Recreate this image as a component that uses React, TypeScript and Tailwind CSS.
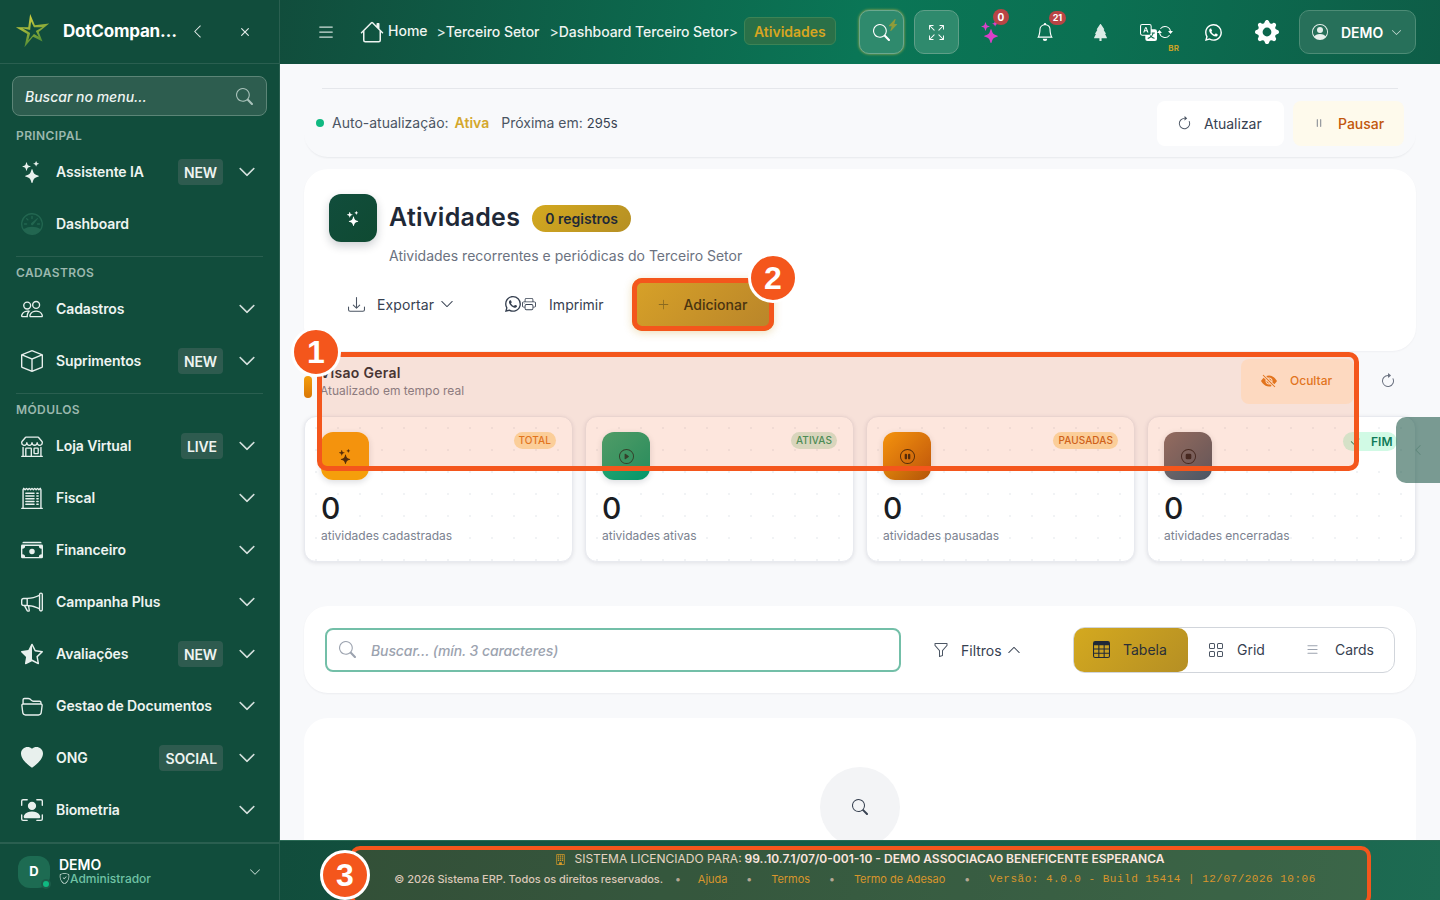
import React from "react";
import {
  BsArrowClockwise, BsArrowRepeat, BsArrowsFullscreen, BsBell, BsBox, BsBuilding, BsCashStack, BsCheck2, BsChevronDown, BsChevronLeft, BsChevronUp, BsDownload, BsEyeSlashFill, BsFolder2Open, BsFunnel, BsGearFill, BsGrid, BsHeartFill, BsHouse, BsLightningChargeFill, BsList, BsMegaphone, BsPauseCircle, BsPause, BsPeople, BsPersonBoundingBox, BsPersonCircle, BsPlayCircle, BsPlusLg, BsPrinter, BsReceiptCutoff, BsSearch, BsShieldCheck, BsShop, BsSpeedometer, BsStarHalf, BsStars, BsStopCircle, BsTable, BsTranslate, BsTreeFill, BsWhatsapp, BsX,
} from "react-icons/bs";

type Item = { icon: React.ReactNode; label: string; badge?: string; noChevron?: boolean };

const icon = "w-[22px] h-[22px] text-[#e8f0ed]";

function Row({ item }: { item: Item }) {
  return (
    <div className="h-[52px] flex items-center pl-[21px] pr-[23px] text-[#eef4f1]">
      <span className="w-[35px] shrink-0 flex">{item.icon}</span>
      <span className="flex-1 -mt-[1px] text-[14px] font-semibold tracking-[-0.1px] whitespace-nowrap">{item.label}</span>
      {item.badge && (
        <span className="h-[26px] px-[6px] rounded-[4px] bg-[#2e5b4f] flex items-center text-[14px] font-semibold tracking-[-0.1px]">{item.badge}</span>
      )}
      {!item.noChevron && <BsChevronDown className="w-[18px] h-[18px] ml-[15px] text-[#e4ecea] stroke-[0.5px]" />}
    </div>
  );
}

function Section({ title, items, first }: { title: string; items: Item[]; first?: boolean }) {
  return (
    <div>
      <div className={`${first ? "" : "border-t border-[#2a5f50] mt-[6px] pt-[8px]"} mx-[16px] text-[12px] leading-[16px] font-semibold tracking-[0.4px] text-[#9bb8ae] pb-[2px]`}>
        {title}
      </div>
      {items.map((i) => (
        <Row key={i.label} item={i} />
      ))}
    </div>
  );
}

function Sidebar() {
  return (
    <aside className="w-[280px] shrink-0 h-full bg-[#114d3c] border-r border-[#2a5f50] flex flex-col">
      <div className="h-[64px] shrink-0 border-b border-[#2a5f50] flex items-center pl-[14px] pr-[25px]">
        <svg viewBox="0 0 40 40" className="w-[38px] h-[38px] shrink-0">
          <defs>
            <linearGradient id="lg" x1="0" y1="0" x2="0.4" y2="1">
              <stop offset="0" stopColor="#f0e040" />
              <stop offset="1" stopColor="#4d8a35" />
            </linearGradient>
          </defs>
          <path d="M17 1 L22 13 L37 11 L26 20 L30 30 L20 25 L11 36 L14 22 L2 15 L15 15 Z M18 9 L17 18 L9 16 L17 21 L15 29 L21 22 L26 25 L23 19 L30 15 L21 15 Z" fill="url(#lg)" fillRule="evenodd" />
        </svg>
        <span className="ml-[11px] text-[17px] font-bold text-white tracking-[-0.2px] w-[111px] whitespace-nowrap">DotCompan…</span>
        <BsChevronLeft className="ml-[16px] w-[15px] h-[15px] text-[#e4ecea]" />
        <BsX className="ml-[auto] w-[18px] h-[18px] text-[#e4ecea]" />
      </div>
      <div className="mt-[12px] mx-[12px] h-[40px] shrink-0 rounded-[8px] bg-[#2d5d4f] border border-[#5c8577] flex items-center pl-[12px] pr-[13px]">
        <span className="flex-1 text-[14px] font-medium italic text-[#eef4f1]">Buscar no menu...</span>
        <BsSearch className="w-[17px] h-[17px] text-[#a9c2ba]" />
      </div>
      <div className="flex-1 min-h-0 overflow-hidden pt-[12px]">
        <Section
          first
          title="PRINCIPAL"
          items={[
            { icon: <BsStars className={icon} />, label: "Assistente IA", badge: "NEW" },
            { icon: <BsSpeedometer className="w-[22px] h-[22px] text-[#226650]" />, label: "Dashboard", noChevron: true },
          ]}
        />
        <Section
          title="CADASTROS"
          items={[
            { icon: <BsPeople className={icon} />, label: "Cadastros" },
            { icon: <BsBox className={icon} />, label: "Suprimentos", badge: "NEW" },
          ]}
        />
        <Section
          title="MÓDULOS"
          items={[
            { icon: <BsShop className={icon} />, label: "Loja Virtual", badge: "LIVE" },
            { icon: <BsReceiptCutoff className={icon} />, label: "Fiscal" },
            { icon: <BsCashStack className={icon} />, label: "Financeiro" },
            { icon: <BsMegaphone className={icon} />, label: "Campanha Plus" },
            { icon: <BsStarHalf className={icon} />, label: "Avaliações", badge: "NEW" },
            { icon: <BsFolder2Open className={icon} />, label: "Gestao de Documentos" },
            { icon: <BsHeartFill className={icon} />, label: "ONG", badge: "SOCIAL" },
            { icon: <BsPersonBoundingBox className={icon} />, label: "Biometria" },
          ]}
        />
      </div>
      <div className="h-[58px] shrink-0 border-t-2 border-[#2a5f50] flex items-center pl-[18px] pr-[18px]">
        <div className="relative w-[32px] h-[32px] rounded-[12px] bg-[#1d6b52] flex items-center justify-center text-white text-[13px] font-bold">
          D
          <span className="absolute -right-[1px] -bottom-[1px] w-[10px] h-[10px] rounded-full bg-[#10b981] border-2 border-[#1d5c49]" />
        </div>
        <div className="ml-[9px] flex-1 flex flex-col -mt-[1px]">
          <span className="text-[14px] leading-[14px] font-semibold text-white">DEMO</span>
          <span className="flex items-center text-[12px] leading-[13px] font-medium text-[#6fc2a4]">
            <BsShieldCheck className="w-[11px] h-[11px] text-[#cfe3dc]" />
            Administrador
          </span>
        </div>
        <BsChevronDown className="w-[12px] h-[12px] text-[#cfe3dc]" />
      </div>
    </aside>
  );
}

function Header() {
  return (
    <header className="h-[64px] shrink-0 bg-[linear-gradient(100deg,#114d3c_0%,#0a7656_50%,#0b7052_70%,#0e5d47_100%)] flex items-center pl-[36px] text-[#eef4f1]">
      <BsList className="w-[20px] h-[20px] text-[#cfe0da]" />
      <BsHouse className="ml-[24px] w-[24px] h-[24px] text-[#eef4f1]" />
      <span className="ml-[4px] text-[14px] font-medium -mt-[4px]">Home</span>
      <span className="ml-[9px] text-[14px] text-[#dfe9e5] -mt-[2px]">&gt;</span>
      <span className="text-[14px] font-medium -mt-[2px] tracking-[-0.05px]">Terceiro Setor</span>
      <span className="ml-[10px] text-[14px] text-[#dfe9e5] -mt-[2px]">&gt;</span>
      <span className="text-[14px] font-medium -mt-[2px] tracking-[-0.05px]">Dashboard Terceiro Setor</span>
      <span className="text-[14px] text-[#dfe9e5] -mt-[2px]">&gt;</span>
      <span className="ml-[6px] -mt-[2px] h-[28px] w-[92px] rounded-[6px] bg-[#2a7048] border border-[#3d8355] flex items-center justify-center text-[14px] font-semibold text-[#d6a521]">Atividades</span>
      <div className="ml-[23px] relative w-[45px] h-[44px] rounded-[10px] bg-[#2f8a6d] border border-[#6ba88f] flex items-center justify-center shadow-[0_0_3px_#b9b04a]">
        <BsSearch className="w-[17px] h-[17px] text-white" />
        <BsLightningChargeFill className="absolute right-[4px] top-[8px] w-[12px] h-[12px] text-[#8f9c3a]" />
      </div>
      <div className="ml-[10px] w-[45px] h-[44px] rounded-[10px] bg-[#2f8a6d] border border-[#5f9f88] flex items-center justify-center">
        <BsArrowsFullscreen className="w-[15px] h-[15px] text-white" />
      </div>
      <div className="ml-[20px] relative w-[24px] h-[24px] flex items-center justify-center">
        <BsStars className="w-[22px] h-[22px] text-[#d940c8]" />
        <span className="absolute -right-[6px] -top-[11px] w-[16px] h-[16px] rounded-full bg-[#b94545] text-white text-[10px] font-bold flex items-center justify-center">0</span>
      </div>
      <div className="ml-[33px] -mt-[1px] relative flex">
        <BsBell className="w-[18px] h-[18px] text-white" />
        <span className="absolute -right-[12px] -top-[12px] w-[17px] h-[14px] rounded-full bg-[#b94545] text-white text-[9px] font-bold flex items-center justify-center">21</span>
      </div>
      <BsTreeFill className="ml-[38px] w-[17px] h-[17px] text-[#dcebe6]" />
      <div className="ml-[31px] relative flex items-center">
        <BsTranslate className="w-[17px] h-[17px] text-white" />
        <BsArrowRepeat className="w-[16px] h-[16px] text-white" />
        <span className="absolute right-[-6px] -bottom-[13px] text-[8px] font-bold text-[#c9a227]">BR</span>
      </div>
      <BsWhatsapp className="ml-[32px] w-[17px] h-[17px] text-white" />
      <BsGearFill className="ml-[33px] w-[24px] h-[24px] text-white" />
      <div className="ml-[20px] w-[117px] h-[44px] rounded-[10px] bg-[#27705a] border border-[#4d8c76] flex items-center pl-[12px]">
        <BsPersonCircle className="w-[16px] h-[16px] text-[#e6f0ec]" />
        <span className="ml-[13px] text-[14px] font-semibold text-white">DEMO</span>
        <BsChevronDown className="ml-[8px] w-[11px] h-[11px] text-[#cfe0da]" />
      </div>
    </header>
  );
}

function Stat({ iconEl, grad, tag, tagCls, label }: { iconEl: React.ReactNode; grad: string; tag: string; tagCls: string; label: string }) {
  return (
    <div className="flex-1 h-[146px] rounded-[12px] bg-white border border-[#e8eaef] shadow-[0_1px_4px_rgba(15,23,42,0.1)] pt-[15px] px-[16px] bg-[radial-gradient(#f1f3f5_1px,transparent_1px)] bg-[length:22px_22px]">
      <div className="flex items-start justify-between">
        <div className={`w-[48px] h-[48px] rounded-[12px] ${grad} flex items-center justify-center shadow-[0_2px_6px_rgba(15,23,42,0.15)]`}>{iconEl}</div>
        <span className={`h-[17px] px-[5px] rounded-full text-[10px] font-medium tracking-[0.1px] flex items-center ${tagCls}`}>{tag}</span>
      </div>
      <div className="mt-[10px] text-[30px] leading-[36px] font-medium text-[#1a1d23]">0</div>
      <div className="mt-[1px] text-[12px] leading-[18px] text-[#7b8290]">{label}</div>
    </div>
  );
}

function Content() {
  return (
    <div className="flex-1 min-h-0 overflow-hidden bg-[#f8f9fb] pt-[24px] pl-[24px] pr-[24px]">
      <div className="h-[69px] rounded-[24px] shadow-[0_2px_2px_-1px_rgba(15,23,42,0.07)] flex flex-col text-[14px] text-[#4b5563]">
        <div className="h-px mx-[18px] bg-[#e5e7eb] shrink-0" />
        <div className="flex-1 flex items-center pl-[12px] pr-[12px]">
          <span className="w-[8px] h-[8px] rounded-full bg-[#10b981]" />
          <div className="flex items-baseline">
            <span className="ml-[8px]">Auto-atualização:</span>
            <span className="ml-[6px] font-semibold text-[#d4a72c]">Ativa</span>
            <span className="ml-[12px]">Próxima em:</span>
            <span className="ml-[4px] text-[#374151] text-[13px]">295s</span>
          </div>
          <div className="ml-auto w-[127px] h-[45px] rounded-[8px] bg-white flex items-center pl-[20px] text-[#374151]">
            <BsArrowClockwise className="w-[15px] h-[15px] text-[#4b5563]" />
            <span className="ml-[12px]">Atualizar</span>
          </div>
          <div className="ml-[9px] w-[111px] h-[45px] rounded-[8px] bg-[#fefaec] flex items-center pl-[19px] text-[#c2570c]">
            <BsPause className="w-[14px] h-[14px] text-[#6b7280]" />
            <span className="ml-[12px] font-medium">Pausar</span>
          </div>
        </div>
      </div>

      <div className="mt-[12px] h-[182px] rounded-[24px] bg-white shadow-[0_1px_2px_rgba(15,23,42,0.04)] pt-[25px] pl-[25px]">
        <div className="flex items-center">
          <div className="w-[48px] h-[48px] rounded-[12px] bg-[linear-gradient(135deg,#114d3c,#0f4a32)] flex items-center justify-center shadow-[0_4px_10px_rgba(15,23,42,0.2)]">
            <BsStars className="w-[15px] h-[15px] text-white" />
          </div>
          <h1 className="ml-[12px] text-[25px] font-semibold text-[#1f2937] tracking-[0.3px]">Atividades</h1>
          <span className="ml-[12px] h-[27px] px-[13px] rounded-full bg-[linear-gradient(135deg,#d4a91f,#b58f24)] text-[14px] font-semibold text-[#1f2937] flex items-center">0 registros</span>
        </div>
        <p className="mt-[4px] ml-[60px] text-[14px] leading-[20px] text-[#6b7280]">Atividades recorrentes e periódicas do Terceiro Setor</p>
        <div className="mt-[14px] flex items-center text-[14px] text-[#374151] h-[48px]">
          <BsDownload className="ml-[19px] w-[17px] h-[17px] text-[#4b5563]" />
          <span className="ml-[12px] tracking-[0.1px]">Exportar</span>
          <BsChevronDown className="ml-[6px] w-[14px] h-[14px]" />
          <BsWhatsapp className="ml-[51px] w-[16px] h-[16px]" />
          <BsPrinter className="w-[14px] h-[14px] ml-[1px]" />
          <span className="ml-[13px]">Imprimir</span>
          <div className="ml-[28px] w-[142px] h-[53px] rounded-[10px] bg-[linear-gradient(135deg,#d8a228,#b8842a)] flex items-center pl-[25px] text-[#4a3410] shadow-[0_2px_8px_rgba(200,150,30,0.3)]">
            <BsPlusLg className="w-[13px] h-[13px] text-[#8a6a20]" />
            <span className="ml-[14px] font-medium">Adicionar</span>
          </div>
        </div>
      </div>

      <div className="h-[60px] flex items-center">
        <span className="w-[8px] h-[22px] rounded-full bg-[linear-gradient(180deg,#f59e0b,#d97706)] mt-[12px] shrink-0" />
        <div className="ml-[8px] flex-1">
          <div className="text-[14px] leading-[20px] font-semibold text-[#2a2f38] tracking-[0.3px]">Visao Geral</div>
          <div className="text-[12px] leading-[16px] text-[#7b8290]">Atualizado em tempo real</div>
        </div>
        <div className="w-[113px] h-[45px] rounded-[8px] bg-[#fff0dd] flex items-center pl-[20px] text-[12px] font-medium text-[#e07a1f]">
          <BsEyeSlashFill className="w-[16px] h-[16px]" />
          <span className="ml-[13px]">Ocultar</span>
        </div>
        <BsArrowClockwise className="ml-[26px] mr-[20px] w-[16px] h-[16px] text-[#6b7280]" />
      </div>

      <div className="mt-[5px] flex gap-[12px]">
        <Stat grad="bg-[linear-gradient(135deg,#f59e0b,#f59e0b)]" iconEl={<BsStars className="w-[15px] h-[15px] text-[#3a2508]" />} tag="TOTAL" tagCls="bg-[#fde3b0] text-[#e07a1f]" label="atividades cadastradas" />
        <Stat grad="bg-[linear-gradient(135deg,#34a874,#059669)]" iconEl={<BsPlayCircle className="w-[15px] h-[15px] text-[#143c2d]" />} tag="ATIVAS" tagCls="bg-[#d5ecd9] text-[#2f9560]" label="atividades ativas" />
        <Stat grad="bg-[linear-gradient(135deg,#f59e0b,#b45309)]" iconEl={<BsPauseCircle className="w-[15px] h-[15px] text-[#3a2508]" />} tag="PAUSADAS" tagCls="bg-[#fde3b0] text-[#c9631a]" label="atividades pausadas" />
        <Stat grad="bg-[linear-gradient(135deg,#846f6b,#4b5563)]" iconEl={<BsStopCircle className="w-[15px] h-[15px] text-[#2a2020]" />} tag="" tagCls="hidden" label="atividades encerradas" />
      </div>

      <div className="mt-[44px] h-[87px] rounded-[24px] bg-white shadow-[0_1px_2px_rgba(15,23,42,0.05)] flex items-center px-[21px]">
        <div className="w-[576px] h-[44px] rounded-[8px] border-2 border-[#73bfa8] flex items-center pl-[12px]">
          <BsSearch className="w-[17px] h-[17px] text-[#9ca3af]" />
          <span className="ml-[15px] mt-[1px] text-[14px] font-medium italic text-[#9ca3af] tracking-[-0.1px]">Buscar... (mín. 3 caracteres)</span>
        </div>
        <BsFunnel className="ml-[32px] w-[16px] h-[16px] text-[#4b5563]" />
        <span className="ml-[12px] mt-[1px] text-[14px] text-[#374151]">Filtros</span>
        <BsChevronUp className="ml-[5px] w-[14px] h-[14px] text-[#374151]" />
        <div className="ml-auto w-[322px] h-[46px] rounded-[12px] border border-[#d1d5db] flex items-center text-[14px] text-[#374151]">
          <div className="w-[114px] h-full rounded-[10px] bg-[linear-gradient(135deg,#d4a91f,#b58f24)] flex items-center pl-[19px] text-[#2a2f38]">
            <BsTable className="w-[17px] h-[17px] text-[#1f2937]" />
            <span className="ml-[13px]">Tabela</span>
          </div>
          <BsGrid className="ml-[20px] w-[16px] h-[16px] text-[#4b5563]" />
          <span className="ml-[13px]">Grid</span>
          <BsList className="ml-[40px] w-[15px] h-[15px] text-[#9ca3af]" />
          <span className="ml-[15px]">Cards</span>
        </div>
      </div>

      <div className="mt-[25px] h-[300px] rounded-t-[24px] bg-white flex justify-center pt-[49px]">
        <div className="w-[80px] h-[80px] rounded-full bg-[#f3f4f6] flex items-center justify-center">
          <BsSearch className="w-[16px] h-[16px] text-[#374151]" />
        </div>
      </div>
    </div>
  );
}

function Footer() {
  return (
    <footer className="h-[60px] shrink-0 bg-[linear-gradient(100deg,#114d3c,#1d6b52)] flex flex-col items-center text-[12px] pt-[9px] border-t border-[#2a6a55]">
      <div className="flex items-center leading-[18px] text-[#e6e8df]">
        <BsBuilding className="w-[11px] h-[11px] text-[#d4a72c]" />
        <span className="ml-[8px]">SISTEMA LICENCIADO PARA:</span>
        <span className="ml-[3px] font-semibold text-white">99..10.7.1/07/0-001-10 - DEMO ASSOCIACAO BENEFICENTE ESPERANCA</span>
      </div>
      <div className="mt-[2px] pr-[10px] flex items-center text-[11px] leading-[18px] font-medium text-[#d9dcd3] tracking-[-0.03px]">
        <span>© 2026 Sistema ERP. Todos os direitos reservados.</span>
        <span className="ml-[12px] mr-[17px] text-[#aab5a8]">•</span>
        <span className="font-normal text-[#d4a030]">Ajuda</span>
        <span className="mx-[19px] text-[#aab5a8]">•</span>
        <span className="font-normal text-[#d4a030]">Termos</span>
        <span className="mx-[19px] text-[#aab5a8]">•</span>
        <span className="font-normal text-[#d4a030]">Termo de Adesao</span>
        <span className="mx-[19px] text-[#aab5a8]">•</span>
        <span className="font-['Liberation_Mono',monospace] font-normal text-[11px] text-[#d4a030] tracking-[0.5px]">Versão: 4.0.0 - Build 15414 | 12/07/2026 10:06</span>
      </div>
    </footer>
  );
}

function Num({ n, cls }: { n: string; cls: string }) {
  return (
    <div className={`absolute w-[50px] h-[50px] rounded-full bg-[#f4561c] border-[3px] border-white flex items-center justify-center text-white text-[32px] font-bold font-['Liberation_Sans',sans-serif] ${cls}`}>{n}</div>
  );
}

export default function App() {
  return (
    <div className="relative w-[1440px] h-[900px] overflow-hidden flex font-['Inter',sans-serif]">
      <Sidebar />
      <main className="flex-1 min-w-0 h-full flex flex-col">
        <Header />
        <Content />
        <Footer />
      </main>

      {/* FIM tag and side tab lie over the last card */}
      <div className="absolute left-[1343px] top-[432px] h-[19px] w-[54px] rounded-full bg-[#d1fae5] flex items-center pl-[6px] text-[12px] font-semibold text-[#0f7a58]">
        <BsCheck2 className="w-[12px] h-[12px]" />
        <span className="ml-[10px]">FIM</span>
      </div>
      <div className="absolute left-[1396px] top-[417px] w-[44px] h-[66px] rounded-l-[10px] bg-[#114d3c]/55 flex items-center pl-[16px]">
        <BsChevronLeft className="w-[12px] h-[12px] text-[#5d8579]" />
      </div>

      {/* annotations */}
      <div className="absolute left-[317px] top-[352px] w-[1042px] h-[119px] rounded-[10px] border-[5px] border-[#f4561c] bg-[#f4561c]/15" />
      <div className="absolute left-[632px] top-[278px] w-[142px] h-[53px] rounded-[10px] border-[5px] border-[#f4561c]" />
      <div className="absolute left-[350px] top-[846px] w-[1021px] h-[60px] rounded-[10px] border-[4px] border-[#f4561c] bg-[#f4561c]/15" />
      <Num n="1" cls="left-[291px] top-[327px]" />
      <Num n="2" cls="left-[748px] top-[253px]" />
      <Num n="3" cls="left-[320px] top-[850px]" />
    </div>
  );
}
